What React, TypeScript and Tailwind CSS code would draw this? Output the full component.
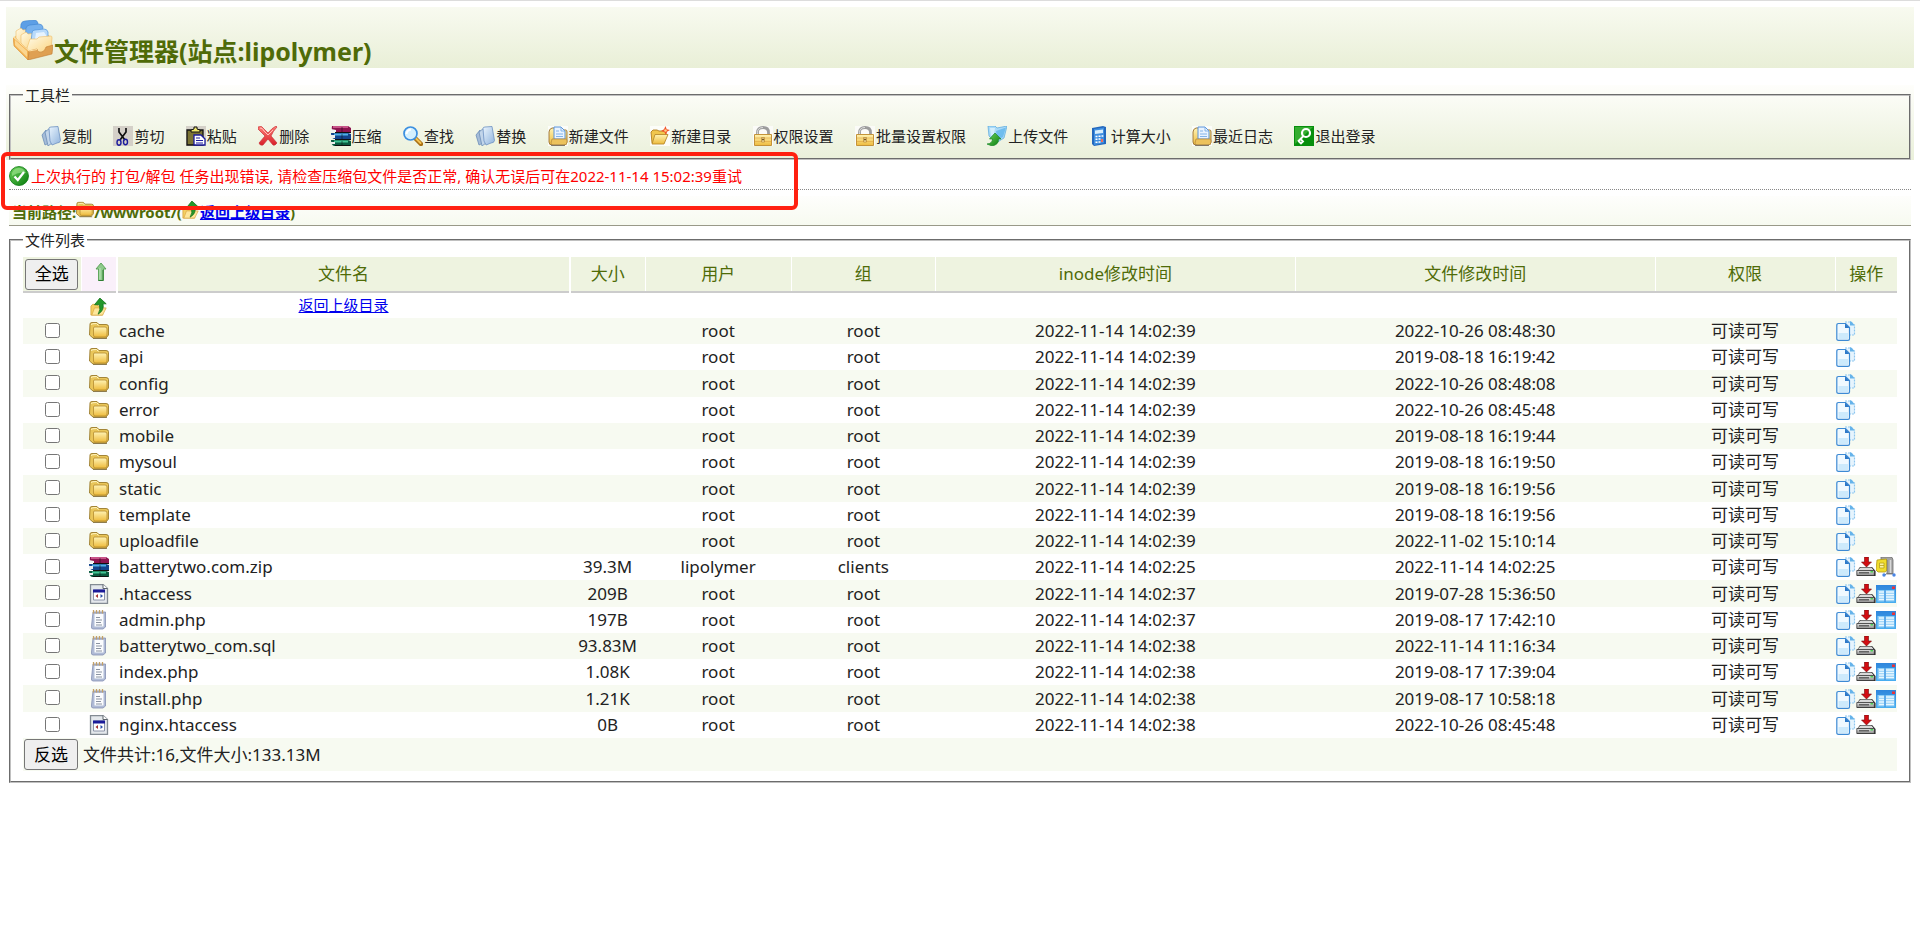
import type { ReactNode } from "react";

type IconProps = { className?: string; children?: ReactNode };

const Svg = ({ className = "size-5", children }: IconProps) => (
  <svg viewBox="0 0 20 20" className={`inline-block shrink-0 ${className}`} aria-hidden="true">
    {children}
  </svg>
);

const Gradients = () => (
  <svg className="absolute size-0" aria-hidden="true">
    <defs>
      <linearGradient id="blue" x1="0" y1="0" x2="1" y2="1">
        <stop offset="0" stopColor="#eaf5fe" />
        <stop offset="1" stopColor="#8fb2dc" />
      </linearGradient>
      <linearGradient id="gold" x1="0" y1="0" x2="0" y2="1">
        <stop offset="0" stopColor="#fff3b4" />
        <stop offset="1" stopColor="#eebb3c" />
      </linearGradient>
      <linearGradient id="cream" x1="0" y1="0" x2="1" y2="1">
        <stop offset="0" stopColor="#fffbe8" />
        <stop offset="1" stopColor="#fbd27c" />
      </linearGradient>
      <linearGradient id="green" x1="0" y1="0" x2="1" y2="1">
        <stop offset="0" stopColor="#6fd45c" />
        <stop offset="1" stopColor="#067a0c" />
      </linearGradient>
      <linearGradient id="red" x1="0" y1="0" x2="0" y2="1">
        <stop offset="0" stopColor="#ff8078" />
        <stop offset="1" stopColor="#d81f28" />
      </linearGradient>
      <linearGradient id="sky" x1="0" y1="0" x2="0" y2="1">
        <stop offset="0" stopColor="#2f86dc" />
        <stop offset="1" stopColor="#49aef0" />
      </linearGradient>
      <linearGradient id="drive" x1="0" y1="0" x2="0" y2="1">
        <stop offset="0" stopColor="#e4e4e4" />
        <stop offset="1" stopColor="#8c8c8c" />
      </linearGradient>
    </defs>
  </svg>
);

const LogoIcon = () => (
  <svg viewBox="0 0 40 40" className="mb-2 size-10 shrink-0" aria-hidden="true">
    <path d="M1 17 7 13 33 13 39 18 17 30Z" fill="#f6c774" />
    <path d="M7 16 8 4Q9 1 12 1L21 0Q24 0 25 3L24 14Z" fill="#5d9fe6" stroke="#3e83cf" strokeWidth=".6" />
    <path d="M3 18V11L8 8 10 10 18 9V21L8 24Z" fill="url(#cream)" stroke="#eebc66" strokeWidth=".6" />
    <path d="M12 19 13 8Q14 5 17 5L26 4Q29 4 30 7L29 17Z" fill="#76b1ee" stroke="#3e83cf" strokeWidth=".6" />
    <path d="M8 23V15L13 12 15 14 24 13V25L13 28Z" fill="url(#cream)" stroke="#eebc66" strokeWidth=".6" />
    <path d="M18 22 19 13Q19 10 22 10L31 9Q34 9 35 12L35 20Z" fill="#b9dafa" stroke="#4f93dc" strokeWidth=".7" />
    <path d="M23 13 31 12 33 15V19H22Z" fill="#e6f3ff" />
    <path d="M14 28 17 19 24 19 26 17 38 16Q39 16 39 18L38 30 17 34Z" fill="url(#cream)" stroke="#eebc66" strokeWidth=".6" />
    <path d="M0 17 16 31 15 40 1 26Z" fill="#f2b253" stroke="#dd9236" strokeWidth=".6" />
    <path d="M2 20 14 31V37L2 25Z" fill="#fbd690" />
    <path d="M16 31 24 29Q25 33 29 32 32 31 33 27L40 25 39 34 15 40Z" fill="#dfa052" stroke="#c27c30" strokeWidth=".6" />
    <path d="M0 17 16 31 24 29.500" fill="none" stroke="#ffe2a6" />
  </svg>
);

const CopyIcon = () => (
  <Svg>
    <path d="M1 9 5 4 8 17 4 19Z" fill="#a5bcd8" stroke="#6b8db8" strokeWidth=".8" />
    <path d="M4 6 9 2 11 17 7 20Z" fill="#c2d5ea" stroke="#6b8db8" strokeWidth=".8" />
    <path d="M8 2.500Q8 1 10 1L17 .5 19.500 14.500Q19 17 16 17L11 19 9 15Z" fill="url(#blue)" stroke="#6d91c2" strokeWidth=".8" />
  </Svg>
);

const CutIcon = () => (
  <Svg>
    <path d="M0 0H20V20H0Z" fill="#d4d0c8" />
    <path d="M6 2V6L12 14M13 2V6L7 14" fill="none" stroke="#111" strokeWidth="1.700" />
    <ellipse cx="6" cy="16.500" rx="2" ry="2.700" fill="none" stroke="#1c1c9c" strokeWidth="1.400" />
    <ellipse cx="12.500" cy="16" rx="2" ry="2.700" fill="none" stroke="#1c1c9c" strokeWidth="1.400" />
  </Svg>
);

const PasteIcon = () => (
  <Svg>
    <path d="M0 0H20V20H0Z" fill="#d4d0c8" />
    <path d="M1 4H17V19H1Z" fill="#7b7434" stroke="#111" strokeWidth="1.300" />
    <path d="M5 6V4L8 3V1H11V3L14 4V6Z" fill="#efe76e" stroke="#111" />
    <path d="M8 9H15L19 13V19H8Z" fill="#fff" stroke="#1c1c9c" strokeWidth="1.300" />
    <path d="M10 12H14M10 14.500H17M10 17H17" stroke="#1c1c9c" />
  </Svg>
);

const DeleteIcon = () => (
  <Svg>
    <path d="M0 1Q4-1 6 3L10 7Q14 2 18 0L19 1Q15 5 13 10L19 17Q17 20 15 19L10 13 5 19Q2 20 1 17L7 10 0 3Z" fill="url(#red)" stroke="#c8323a" strokeWidth=".7" />
    <path d="M2 2Q5 2 6 5L10 9 15 4" fill="none" stroke="#ffc0ba" />
  </Svg>
);

const BooksIcon = () => (
  <Svg>
    <path d="M1 0H17L20 2V6H3Q0 5 1 0Z" fill="#8c1450" />
    <path d="M2 1H17" stroke="#dc6b9c" strokeWidth="1.500" />
    <path d="M0 3 5 4V6H0Z" fill="#f2f2f2" />
    <path d="M0 7H17L20 8V13H3Q0 12 0 7Z" fill="#12438c" />
    <path d="M3 8.500H17" stroke="#4fb0e6" strokeWidth="2" />
    <path d="M0 9H4V12H0Z" fill="#eee" />
    <path d="M0 14H17L20 15V20H3Q0 19 0 14Z" fill="#0b5a40" />
    <path d="M3 15.500H17" stroke="#42c495" strokeWidth="2" />
    <path d="M0 16H4V18H0Z" fill="#eee" />
    <path d="M4 6.500H20M4 13.500H20M4 19.500H19" stroke="#111" />
    <path d="M11 1V6M11 8V13M11 15V19" stroke="#111" strokeOpacity=".35" strokeWidth="1.500" />
  </Svg>
);

const SearchIcon = () => (
  <Svg>
    <path d="m12 12 6 6" stroke="#a97116" strokeWidth="4.500" strokeLinecap="round" />
    <path d="m12.500 12 5 5" stroke="#f5c353" strokeWidth="2" strokeLinecap="round" />
    <circle cx="7.500" cy="7.500" r="6.500" fill="#d4f0fe" stroke="#3b8fe0" strokeWidth="1.700" />
    <path d="M3.500 8Q4 4 8 3.500" fill="none" stroke="#fff" strokeWidth="2" />
  </Svg>
);

const NewFileIcon = () => (
  <Svg>
    <path d="M0 0H20V20H0Z" fill="#fcfdf9" />
    <path d="M1 6Q1 3 4 2H8L10 4H18Q19 4 19 6V16Q19 19 16 19H4Q1 19 1 16Z" fill="url(#gold)" stroke="#a07a3a" />
    <path d="M6 1H13L17 5V13H6Z" fill="#e9f3ff" stroke="#5b93d6" />
    <path d="M13 1V5H17M8 5H11M8 8H15M8 10.500H15" fill="none" stroke="#77ade6" strokeWidth=".9" />
    <path d="M4 13H18Q19 13 19 15V16Q19 19 16 19H5Q3 19 3 17Z" fill="#ecc25c" stroke="#b98d3e" strokeWidth=".8" />
    <path d="M3 19.300H17" stroke="#66625e" strokeWidth=".9" />
  </Svg>
);

const NewFolderIcon = () => (
  <Svg>
    <path d="M0 0H20V20H0Z" fill="#fcfdf9" />
    <path d="M1 6 3 4H7L9 5H16V9L14 17H2Z" fill="#f1c64d" stroke="#b27e20" strokeWidth=".9" />
    <path d="M5 8.500H18L14 18H2Z" fill="url(#gold)" stroke="#b98a2c" strokeWidth=".9" />
    <path d="m15.500 0 1.200 3.200L20 4l-3 1.700L16 9l-1.700-3L11 5l3-1.700Z" fill="#f2552c" />
    <circle cx="15.500" cy="4.500" r="1.300" fill="#ffd083" />
  </Svg>
);

const LockIcon = () => (
  <Svg>
    <path d="M0 0H20V20H0Z" fill="#fbfbf8" />
    <path d="M4.500 9V6.500Q4.500 1.500 10 1.500T15.500 6.500V9" fill="none" stroke="#9c9c9c" strokeWidth="2.800" />
    <path d="M4.500 8V6.500Q4.500 1.500 10 1.500" fill="none" stroke="#dcdcdc" />
    <path d="M1.500 8.500H18.500V19.500H1.500Z" fill="url(#gold)" stroke="#c39339" />
    <path d="M2 12H18M2 15.500H18" stroke="#dfa53f" strokeOpacity=".6" />
    <path d="M8.500 11.500H11.500V16H8.500Z" fill="#fae3a0" stroke="#b48430" strokeWidth=".7" />
    <circle cx="10" cy="13.500" r="1" fill="#6b4b10" />
  </Svg>
);

const UploadIcon = () => (
  <Svg>
    <path d="M1 0H8L10 2 20 0 17 12 9 17 2 10Z" fill="#a9daf8" stroke="#55a6dd" strokeWidth=".7" />
    <path d="M9 5 19 1.500 16 11 10 14Z" fill="#70bdee" />
    <path d="M3 2 8 2 7 8 4 10Z" fill="#d3eefd" />
    <path d="M8 7 14 13 11.500 13Q12 18.500 5 20L0 18Q5.500 17.500 5.500 13H2.500Z" fill="url(#green)" stroke="#1c8a2c" strokeWidth=".7" />
  </Svg>
);

const CalcIcon = () => (
  <Svg>
    <path d="M2 2 13 0 16 1V18L4 20 2 18Z" fill="#2368bd" />
    <path d="M4 3 14 1.500V17L4 19Z" fill="#3f8fe0" />
    <path d="M5 4.500 13 3.500V7L5 8Z" fill="#d8eefc" />
    <path d="M5.500 10.500H7.500M8.500 10.200H10.500M11.500 10H13.300M5.500 13.300H7.500M8.500 13H10.500M5.500 16.300H7.500M8.500 16H10.500" stroke="#fff" strokeWidth="1.600" />
    <path d="M12 13V16" stroke="#f26d5b" strokeWidth="2" />
  </Svg>
);

const LogoutIcon = () => (
  <Svg>
    <path d="M0 0H20V20H0Z" fill="#078f0d" />
    <path d="M1 1H19L1 18Z" fill="#35ad30" />
    <circle cx="12" cy="7" r="4" fill="none" stroke="#fff" strokeWidth="2.200" />
    <path d="M9.500 10 4 15.500M6.500 13 9 15.500 7 17.500 4.500 15" fill="none" stroke="#fff" strokeWidth="1.900" />
  </Svg>
);

const CheckIcon = () => (
  <Svg>
    <circle cx="10" cy="10" r="9.500" fill="url(#green)" stroke="#0d7a12" strokeWidth=".8" />
    <path d="M3 7Q5 2 10 2T17 7Q10 5 3 10Z" fill="#a4e894" fillOpacity=".6" />
    <path d="m5.500 10.500 3.300 3.500L15 6" fill="none" stroke="#fff" strokeWidth="2.300" />
  </Svg>
);

const FolderIcon = ({ className }: IconProps) => (
  <Svg className={className}>
    <path d="M1 3Q1 1.500 3 1.500H8L10 3.500H17Q19.500 3.500 19.500 5.500V14L17 17H4L.5 14Z" fill="#e9c65a" stroke="#9a7a2a" strokeWidth=".9" />
    <path d="M5 6H16Q18 6 18 8V14Q18 16 16 16H6Q4.500 16 4.500 14V7Z" fill="url(#gold)" stroke="#b58c2e" strokeWidth=".8" />
    <path d="M2 3.500Q3 2.500 7.500 2.500L9.500 4.500" fill="none" stroke="#fff5c2" />
    <path d="M4 17.500H18" stroke="#7c6a3a" strokeWidth=".8" />
  </Svg>
);

const UpFolderIcon = ({ className }: IconProps) => (
  <Svg className={className}>
    <path d="M1 9 3 7H8L9 9H14V19H1Z" fill="#f4cf61" stroke="#d19f38" strokeWidth=".8" />
    <path d="M5 11H18L14 19H2Z" fill="#fde69a" stroke="#dca944" strokeWidth=".8" />
    <path d="M11 0 18 6.500H14.500Q16 14 9 18 12 13 10.500 7.500H5Z" fill="#23982a" stroke="#0c6d14" strokeWidth=".8" />
  </Svg>
);

const SortIcon = () => (
  <Svg>
    <path d="m10 1 5 6H12.500V18.500H7.500V7H5Z" fill="#8fca8c" stroke="#56a052" strokeWidth=".9" />
    <path d="M9 6V17.500" stroke="#c0e6be" />
    <path d="M12 8V18.500H7.500" fill="none" stroke="#2f7d33" />
  </Svg>
);

const PageIcon = () => (
  <Svg>
    <path d="M1.500 .5H14L18.500 4.500V19.500H1.500Z" fill="#e4e8ec" stroke="#838b93" strokeWidth="1.300" />
    <path d="M14 .5V4.500H18.500" fill="#fff" stroke="#5d646b" />
    <path d="M4.500 6H15.500V16H4.500Z" fill="#fff" stroke="#8c94a8" />
    <path d="M4 5.500H16V8.500H4Z" fill="#1b1b98" />
    <path d="m9 10-2.500 2L9 14Z" fill="#a5302e" />
    <path d="m11.500 10 2.500 2-2.500 2Z" fill="#2b4fa8" />
  </Svg>
);

const NoteIcon = () => (
  <Svg>
    <path d="M4 2H16.500V17L14 19H4Q2 19 2.500 16Z" fill="#b0bbd6" stroke="#8591b4" strokeWidth=".8" />
    <path d="M5.500 4H14.500V16.500H5.500Z" fill="#fbfcfe" />
    <path d="M7 7.500H11M7 10H13M7 12.500H12M7 15H13" stroke="#8a93a2" />
    <path d="M4.500 0V3.500M7.500 0V3.500M10.500 0V3.500M13.500 0V3.500" stroke="#c3a066" strokeWidth="1.300" />
  </Svg>
);

const DuplicateIcon = () => (
  <Svg>
    <path d="M9 1H14L18.500 4V14H14" fill="#e6f4fd" stroke="#8cc6ef" strokeWidth="1.200" strokeDasharray="2 1" />
    <path d="M14 0V4.500H18.500L16 1Z" fill="#66b3ea" />
    <path d="M2.500 2.500H9.500L13.500 6.500V18Q13.500 19.300 12 19.300H2.500Q.8 19.300 .8 18V4.500Q.8 2.500 2.500 2.500Z" fill="#f0f9ff" stroke="#3d8ad4" strokeWidth="1.200" />
    <path d="M9 2.500V7H13.500Z" fill="#2d78c8" />
    <path d="M2.500 12H12V18H2.500Z" fill="#cdeafc" />
  </Svg>
);

const DownloadIcon = () => (
  <Svg>
    <path d="M4 10H16L19.500 14V19H1V14Z" fill="#111" />
    <path d="M4.500 10.500H15.500L18 13.500H1.500Z" fill="#d9d9d9" />
    <path d="M.8 13.500H18.300V18.500H.8Z" fill="url(#drive)" stroke="#3c3c3c" strokeWidth=".8" />
    <path d="M3 15.800H13" stroke="#4d4d4d" strokeWidth="1.200" />
    <path d="M14.500 14.800H17" stroke="#35d040" strokeWidth="1.300" />
    <path d="M8.500 0H12.500V5H15.500L10.500 10 5.500 5H8.500Z" fill="#d20d12" stroke="#6d080a" strokeWidth=".6" />
  </Svg>
);

const EditIcon = () => (
  <Svg>
    <path d="M0 1H20V19H0Z" fill="url(#sky)" />
    <path d="M1.500 6H18.500V17.500H1.500Z" fill="#8ccdf6" />
    <path d="M3 8H8M3 10.500H8M3 13H8M3 15.500H8M10 8H18M10 10.500H18M10 13H18M10 15.500H18" stroke="#eaf8ff" strokeWidth="1.600" />
    <path d="M9 6V18" stroke="#2f86dc" />
    <path d="M16 2.500H19V5H16Z" fill="#e8323a" />
  </Svg>
);

const UnpackIcon = () => (
  <Svg>
    <path d="M5 0H14Q17 0 17 3V17H11V3H5Z" fill="#a4a4a4" stroke="#707070" strokeWidth=".8" />
    <path d="M14.500 3V16" stroke="#d8d8d8" strokeWidth="1.500" />
    <path d="M1 3 10.500 2V14L9 15H2L0 13Z" fill="#f0dc2c" stroke="#b49c12" strokeWidth=".8" />
    <path d="M3.500 6H8V11H3.500ZM3.500 8.500H8" fill="#fbf3a0" stroke="#b8a11a" strokeWidth=".8" />
    <path d="M8 18.500 11 16.500H17" stroke="#777" fill="none" />
    <circle cx="8" cy="18" r="1.700" fill="#4a86e6" />
    <circle cx="18" cy="18" r="1.700" fill="#4a86e6" />
  </Svg>
);

const tools = [
  { label: "复制", Icon: CopyIcon },
  { label: "剪切", Icon: CutIcon },
  { label: "粘贴", Icon: PasteIcon },
  { label: "删除", Icon: DeleteIcon },
  { label: "压缩", Icon: BooksIcon },
  { label: "查找", Icon: SearchIcon },
  { label: "替换", Icon: CopyIcon },
  { label: "新建文件", Icon: NewFileIcon },
  { label: "新建目录", Icon: NewFolderIcon },
  { label: "权限设置", Icon: LockIcon },
  { label: "批量设置权限", Icon: LockIcon },
  { label: "上传文件", Icon: UploadIcon },
  { label: "计算大小", Icon: CalcIcon },
  { label: "最近日志", Icon: NewFileIcon },
  { label: "退出登录", Icon: LogoutIcon },
];

type FileRow = {
  name: string;
  icon: "folder" | "zip" | "page" | "note";
  size?: string;
  user?: string;
  group?: string;
  inode: string;
  mtime: string;
  actions?: ("download" | "edit" | "unpack")[];
};

const files: FileRow[] = [
  { name: "cache", icon: "folder", inode: "2022-11-14 14:02:39", mtime: "2022-10-26 08:48:30" },
  { name: "api", icon: "folder", inode: "2022-11-14 14:02:39", mtime: "2019-08-18 16:19:42" },
  { name: "config", icon: "folder", inode: "2022-11-14 14:02:39", mtime: "2022-10-26 08:48:08" },
  { name: "error", icon: "folder", inode: "2022-11-14 14:02:39", mtime: "2022-10-26 08:45:48" },
  { name: "mobile", icon: "folder", inode: "2022-11-14 14:02:39", mtime: "2019-08-18 16:19:44" },
  { name: "mysoul", icon: "folder", inode: "2022-11-14 14:02:39", mtime: "2019-08-18 16:19:50" },
  { name: "static", icon: "folder", inode: "2022-11-14 14:02:39", mtime: "2019-08-18 16:19:56" },
  { name: "template", icon: "folder", inode: "2022-11-14 14:02:39", mtime: "2019-08-18 16:19:56" },
  { name: "uploadfile", icon: "folder", inode: "2022-11-14 14:02:39", mtime: "2022-11-02 15:10:14" },
  { name: "batterytwo.com.zip", icon: "zip", size: "39.3M", user: "lipolymer", group: "clients", inode: "2022-11-14 14:02:25", mtime: "2022-11-14 14:02:25", actions: ["download", "unpack"] },
  { name: ".htaccess", icon: "page", size: "209B", inode: "2022-11-14 14:02:37", mtime: "2019-07-28 15:36:50", actions: ["download", "edit"] },
  { name: "admin.php", icon: "note", size: "197B", inode: "2022-11-14 14:02:37", mtime: "2019-08-17 17:42:10", actions: ["download", "edit"] },
  { name: "batterytwo_com.sql", icon: "note", size: "93.83M", inode: "2022-11-14 14:02:38", mtime: "2022-11-14 11:16:34", actions: ["download"] },
  { name: "index.php", icon: "note", size: "1.08K", inode: "2022-11-14 14:02:38", mtime: "2019-08-17 17:39:04", actions: ["download", "edit"] },
  { name: "install.php", icon: "note", size: "1.21K", inode: "2022-11-14 14:02:38", mtime: "2019-08-17 10:58:18", actions: ["download", "edit"] },
  { name: "nginx.htaccess", icon: "page", size: "0B", inode: "2022-11-14 14:02:38", mtime: "2022-10-26 08:45:48", actions: ["download"] },
];

const fileIcons = { folder: FolderIcon, zip: BooksIcon, page: PageIcon, note: NoteIcon };

const actionIcons = {
  download: { label: "下载", Icon: DownloadIcon },
  edit: { label: "编辑", Icon: EditIcon },
  unpack: { label: "解压", Icon: UnpackIcon },
};

const headings = ["大小", "用户", "组", "inode修改时间", "文件修改时间", "权限"];

const Toolbar = () => (
  <div className="mx-1.5 mt-[17px] bg-linear-to-b from-[#fefefb] to-[#eaf0da] px-[3px]">
    <fieldset className="min-w-0 border-2 border-[#c0c0c0] px-3 [border-style:groove]">
      <legend className="px-0.5 leading-5">工具栏</legend>
      <div className="pt-[21px] pr-2 pb-3 pl-[18px] font-['Noto_Sans_CJK_SC',sans-serif] leading-5">
        {tools.map(({ label, Icon }) => (
          <span key={label}>
            <button type="button" className="mr-[18px] inline-flex items-center gap-px align-top">
              <Icon />
              {label}
            </button>{" "}
          </span>
        ))}
      </div>
    </fieldset>
  </div>
);

const Message = () => (
  <div className="relative px-[9px] pt-1.5">
    <p className="flex items-center gap-0.5 border-b border-dotted border-[#888] pb-[3px] leading-5 text-[#f00]">
      <CheckIcon />
      上次执行的 打包/解包 任务出现错误, 请检查压缩包文件是否正常, 确认无误后可在2022-11-14 15:02:39重试
    </p>
    <div className="pointer-events-none absolute -top-2 left-px z-10 h-[58px] w-[797px] rounded-md border-4 border-[#ff2010]" />
  </div>
);

const PathBar = () => (
  <div className="mx-[9px] mt-1.5 flex items-center border-b border-[#999988] bg-linear-to-b from-[#fefefc] to-[#f7faf0] pt-[5px] pb-0.5 pl-[3px] leading-[22px] font-bold text-[#4f6b08]">
    当前路径:
    <FolderIcon className="mb-1 size-[18px]" />
    /wwwroot/(
    <UpFolderIcon className="mb-1 size-[18px]" />
    <a href="#up" className="text-[#0000ee] underline">返回上级目录</a>)
  </div>
);

const FileTable = () => (
  <fieldset className="mx-[9px] mt-1 min-w-0 border-2 border-[#c0c0c0] px-3 pb-2.5 [border-style:groove]">
    <legend className="px-0.5 leading-5">文件列表</legend>
    <table className="mt-[7px] w-full table-fixed border-collapse text-center text-[17px] leading-[26px]">
      <colgroup>
        <col className="w-[58px]" />
        <col className="w-9" />
        <col />
        <col className="w-[4%]" />
        <col className="w-[7.8%]" />
        <col className="w-[7.7%]" />
        <col className="w-[19.2%]" />
        <col className="w-[19.2%]" />
        <col className="w-[9.6%]" />
        <col className="w-[62px]" />
      </colgroup>
      <thead>
        <tr className="h-[35px] border-b-2 border-[#ccc] text-[#4f6b08]">
          <th className="bg-[#eef3e0] p-0 font-normal">
            <button type="button" className="h-[31px] w-[53px] rounded-[3px] border border-[#767676] bg-[#efefef] text-black">全选</button>
          </th>
          <th className="border-x border-white bg-[#faf0fa] p-0 font-normal">
            <a href="#sort" aria-label="排序" className="flex justify-center pb-1 pl-1"><SortIcon /></a>
          </th>
          <th className="border-x-2 border-white bg-[#eef3e0] p-0 font-normal">文件名</th>
          {headings.map((heading) => (
            <th key={heading} className="border-r border-white bg-[#eef3e0] p-0 font-normal">{heading}</th>
          ))}
          <th className="bg-[#eef3e0] p-0 font-normal">操作</th>
        </tr>
      </thead>
      <tbody>
        <tr className="h-[25px] leading-[25px]">
          <td />
          <td className="p-0"><UpFolderIcon className="mx-auto block size-[18px]" /></td>
          <td className="p-0 text-[15px]"><a href="#up" className="text-[#0000ee] underline">返回上级目录</a></td>
          <td colSpan={7} />
        </tr>
        {files.map((file) => {
          const Icon = fileIcons[file.icon];
          return (
            <tr key={file.name} className="h-[26px] even:bg-[#f7faf1] nth-[4n]:h-[27px]">
              <td className="p-0 pb-0.5">
                <input type="checkbox" aria-label={file.name} className="mx-auto block size-[15px]" />
              </td>
              <td className="p-0">
                <div className="flex justify-center"><Icon /></div>
              </td>
              <td className="p-0 pl-0.5 text-left">{file.name}</td>
              <td className="p-0">{file.size}</td>
              <td className="p-0">{file.user ?? "root"}</td>
              <td className="p-0">{file.group ?? "root"}</td>
              <td className="p-0">{file.inode}</td>
              <td className="p-0">{file.mtime}</td>
              <td className="p-0">可读可写</td>
              <td className="p-0">
                <div className="flex pl-px">
                  <a href="#copy" aria-label="复制" className="flex"><DuplicateIcon /></a>
                  {file.actions?.map((action) => {
                    const { label, Icon: ActionIcon } = actionIcons[action];
                    return (
                      <a key={action} href={`#${action}`} aria-label={label} className="flex">
                        <ActionIcon />
                      </a>
                    );
                  })}
                </div>
              </td>
            </tr>
          );
        })}
      </tbody>
      <tfoot>
        <tr className="h-[33px] bg-[#f7faf1]">
          <td colSpan={10} className="p-0">
            <div className="flex items-center gap-[5px] pl-px">
              <button type="button" className="h-[31px] w-[54px] rounded-[3px] border border-[#767676] bg-[#efefef] text-black">反选</button>
              文件共计:16,文件大小:133.13M
            </div>
          </td>
        </tr>
      </tfoot>
    </table>
  </fieldset>
);

export default function App() {
  return (
    <div className="border-t border-[#dcdcdc] bg-white font-['Noto_Sans','Noto_Sans_CJK_SC',sans-serif] text-[15px] text-[#222]">
      <Gradients />
      <header className="mx-1.5 mt-1.5 flex h-[61px] items-end gap-px bg-linear-to-b from-[#f8faf0] to-[#e9efd7] pl-[7px]">
        <LogoIcon />
        <h1 className="text-[25px] leading-[34px] font-bold text-[#4f6b08]">文件管理器(站点:lipolymer)</h1>
      </header>
      <Toolbar />
      <Message />
      <PathBar />
      <FileTable />
    </div>
  );
}
